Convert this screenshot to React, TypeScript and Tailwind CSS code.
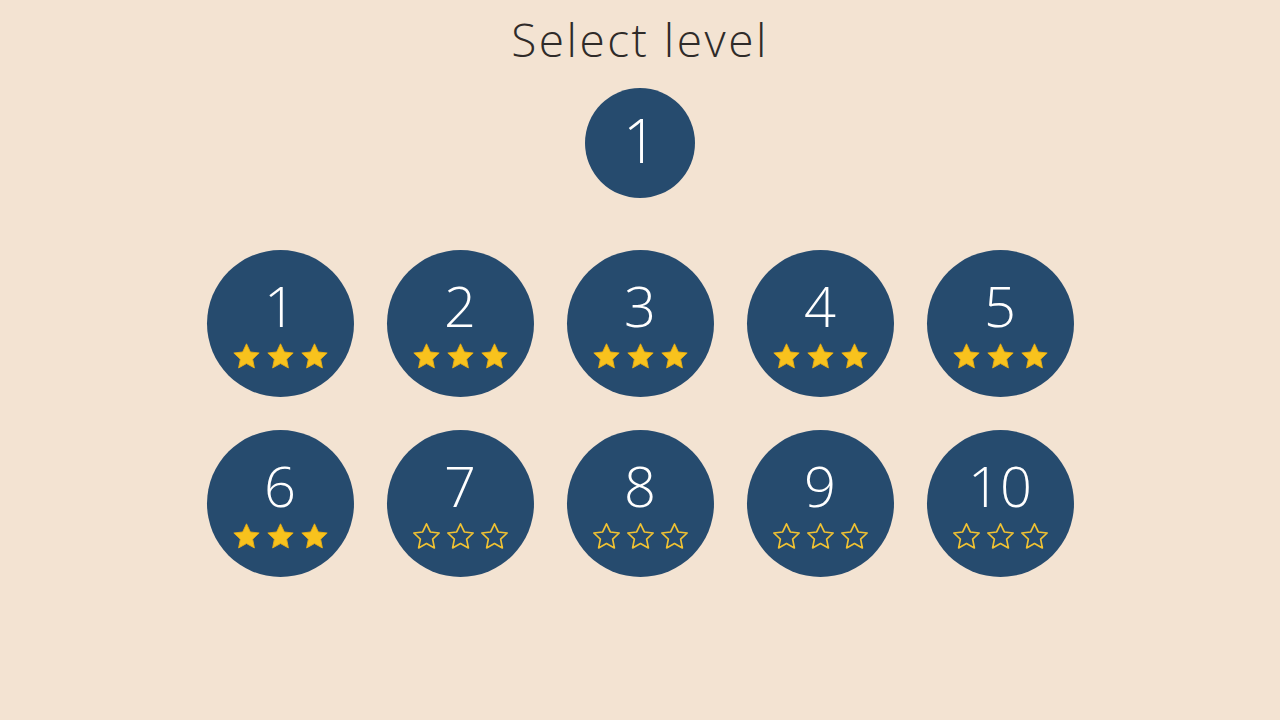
const levels = [
  { n: 1, stars: 3 },
  { n: 2, stars: 3 },
  { n: 3, stars: 3 },
  { n: 4, stars: 3 },
  { n: 5, stars: 3 },
  { n: 6, stars: 3 },
  { n: 7, stars: 0 },
  { n: 8, stars: 0 },
  { n: 9, stars: 0 },
  { n: 10, stars: 0 },
];

function Star({ filled }: { filled: boolean }) {
  return (
    <svg width="31" height="31" viewBox="0 0 24 24">
      <path
        d="M12 2.2l2.95 6.3 6.85.8-5.05 4.75 1.35 6.8L12 17.45l-6.1 3.4 1.35-6.8L2.2 9.3l6.85-.8z"
        fill={filled ? "#f8c21d" : "none"}
        stroke={filled ? "#e9ad12" : "#f1c232"}
        strokeWidth={filled ? 0.7 : 1.3}
        strokeLinejoin="round"
      />
    </svg>
  );
}

function LevelButton({ n, stars }: { n: number; stars: number }) {
  return (
    <button
      type="button"
      className="flex h-[147px] w-[147px] flex-col items-center rounded-full bg-[#264b6e] pt-[27px] text-white"
    >
      <span className="text-[56px] font-light leading-none">{n}</span>
      <span className="mt-[8px] flex gap-[3px]">
        {[0, 1, 2].map((i) => (
          <Star key={i} filled={i < stars} />
        ))}
      </span>
    </button>
  );
}

export default function App() {
  return (
    <div
      className="flex min-h-[720px] w-full flex-col items-center bg-[#f3e3d2] pt-[14px]"
      style={{ fontFamily: '"Open Sans", "Liberation Sans", sans-serif' }}
    >
      <h1 className="text-[46px] font-light leading-[50px] tracking-[2.5px] text-[#2f2b29]">Select level</h1>

      <div className="mt-[24px] flex h-[110px] w-[110px] items-center justify-center rounded-full bg-[#264b6e] pb-[7px]">
        <span className="text-[60px] font-light leading-none text-white">1</span>
      </div>

      <div className="mt-[52px] grid grid-cols-5 gap-[33px]">
        {levels.map((l) => (
          <LevelButton key={l.n} n={l.n} stars={l.stars} />
        ))}
      </div>
    </div>
  );
}
